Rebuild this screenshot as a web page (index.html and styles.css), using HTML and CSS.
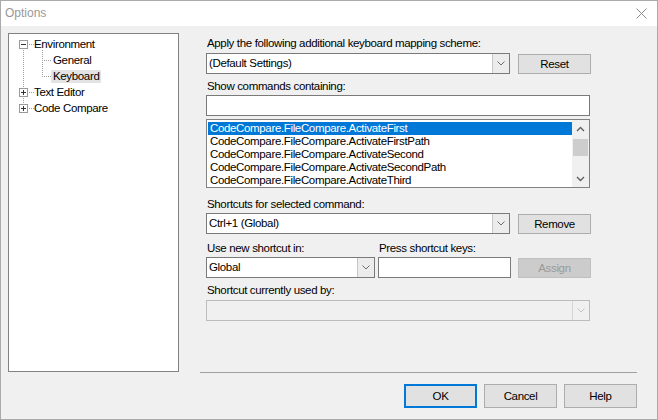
FILE: index.html
```html
<!DOCTYPE html>
<html>
<head>
<meta charset="utf-8">
<title>Options</title>
<link rel="stylesheet" href="styles.css">
</head>
<body>
<div class="window">
  <div class="titlebar">
    <span class="title">Options</span>
    <svg class="close" width="11" height="11" viewBox="0 0 11 11"><path d="M0.5 0.5 L10.5 10.5 M10.5 0.5 L0.5 10.5" stroke="#8c8c8c" stroke-width="1" fill="none"/></svg>
  </div>
  <div class="client">
    <div class="main">
      <div class="tree">
        <svg class="tree-lines" width="60" height="90" viewBox="0 0 60 90">
          <g stroke="#a0a0a0" stroke-width="1" stroke-dasharray="1 1" fill="none">
            <path d="M20 10.5 H26"/>
            <path d="M14.5 16 V54"/>
            <path d="M14.5 64 V70"/>
            <path d="M20 58.5 H26"/>
            <path d="M20 74.5 H26"/>
            <path d="M33.5 16 V43"/>
            <path d="M35 26.5 H43"/>
            <path d="M35 42.5 H43"/>
          </g>
          <g stroke="#9a9a9a" fill="#fff">
            <rect x="10.5" y="6.5" width="8" height="8"/>
            <rect x="10.5" y="54.5" width="8" height="8"/>
            <rect x="10.5" y="70.5" width="8" height="8"/>
          </g>
          <g stroke="#333" stroke-width="1" fill="none">
            <path d="M12 10.5 H17"/>
            <path d="M12 58.5 H17 M14.5 56 V61"/>
            <path d="M12 74.5 H17 M14.5 72 V77"/>
          </g>
        </svg>
        <div class="node l0">Environment</div>
        <div class="node l1"><span class="nt">General</span></div>
        <div class="node l1"><span class="nt sel">Keyboard</span></div>
        <div class="node l0">Text Editor</div>
        <div class="node l0">Code Compare</div>
      </div>
      <div class="side">
        <div class="form">
          <div class="lbl">Apply the following additional keyboard mapping scheme:</div>
          <div class="row r1">
            <div class="combo w304">
              <div class="val">(Default Settings)</div>
              <div class="dd"><svg width="8" height="5" viewBox="0 0 8 5"><path d="M0.5 0.5 L4 4 L7.5 0.5" stroke="#6d6d6d" fill="none"/></svg></div>
            </div>
            <div class="btn">Reset</div>
          </div>
          <div class="lbl m5">Show commands containing:</div>
          <div class="input full"></div>
          <div class="list">
            <div class="items">
              <div class="item selected">CodeCompare.FileCompare.ActivateFirst</div>
              <div class="item">CodeCompare.FileCompare.ActivateFirstPath</div>
              <div class="item">CodeCompare.FileCompare.ActivateSecond</div>
              <div class="item">CodeCompare.FileCompare.ActivateSecondPath</div>
              <div class="item">CodeCompare.FileCompare.ActivateThird</div>
            </div>
            <div class="vscroll">
              <div class="arrow"><svg width="9" height="6" viewBox="0 0 9 6"><path d="M1 5 L4.5 1.5 L8 5" stroke="#606060" stroke-width="1.4" fill="none"/></svg></div>
              <div class="track"><div class="thumb"></div></div>
              <div class="arrow"><svg width="9" height="6" viewBox="0 0 9 6"><path d="M1 1 L4.5 4.5 L8 1" stroke="#606060" stroke-width="1.4" fill="none"/></svg></div>
            </div>
          </div>
          <div class="lbl m9">Shortcuts for selected command:</div>
          <div class="row r2">
            <div class="combo w304">
              <div class="val">Ctrl+1 (Global)</div>
              <div class="dd"><svg width="8" height="5" viewBox="0 0 8 5"><path d="M0.5 0.5 L4 4 L7.5 0.5" stroke="#6d6d6d" fill="none"/></svg></div>
            </div>
            <div class="btn">Remove</div>
          </div>
          <div class="lblrow m7">
            <div class="lbl c1">Use new shortcut in:</div>
            <div class="lbl">Press shortcut keys:</div>
          </div>
          <div class="row r3">
            <div class="combo w169">
              <div class="val">Global</div>
              <div class="dd"><svg width="8" height="5" viewBox="0 0 8 5"><path d="M0.5 0.5 L4 4 L7.5 0.5" stroke="#6d6d6d" fill="none"/></svg></div>
            </div>
            <div class="input w133"></div>
            <div class="btn disabled">Assign</div>
          </div>
          <div class="lbl m5">Shortcut currently used by:</div>
          <div class="combo full disabled">
            <div class="val"></div>
            <div class="dd"><svg width="8" height="5" viewBox="0 0 8 5"><path d="M0.5 0.5 L4 4 L7.5 0.5" stroke="#c4c4c4" fill="none"/></svg></div>
          </div>
        </div>
        <div class="sep"></div>
      </div>
    </div>
    <div class="footer">
      <div class="btn big default">OK</div>
      <div class="btn big">Cancel</div>
      <div class="btn big">Help</div>
    </div>
  </div>
</div>
</body>
</html>
```

FILE: styles.css
```css
* { box-sizing: border-box; }

html, body {
  margin: 0;
  padding: 0;
  background: #f0f0f0;
}

body {
  font-family: "Liberation Sans", Arial, sans-serif;
  font-size: 11.5px;
  letter-spacing: -0.35px;
  color: #000;
}

.window {
  width: 658px;
  height: 420px;
  border: 1px solid #aaaaaa;
  display: flex;
  flex-direction: column;
  background: #f0f0f0;
}

.titlebar {
  height: 25px;
  background: #fff;
  display: flex;
  justify-content: space-between;
  align-items: flex-start;
}

.title {
  padding-left: 4px;
  line-height: 24px;
  font-size: 12px;
  letter-spacing: 0;
  color: #999;
}

.close {
  margin-top: 7px;
  margin-right: 10px;
  display: block;
}

.client {
  flex: 1;
  display: flex;
  flex-direction: column;
}

.main {
  display: flex;
  padding: 7px 0 0 7px;
}

.tree {
  position: relative;
  width: 171px;
  height: 339px;
  border: 1px solid #828282;
  background: #fff;
  padding-top: 2px;
}

.tree-lines {
  position: absolute;
  left: 0;
  top: 0;
}

.node {
  height: 16px;
  line-height: 16px;
  white-space: nowrap;
}

.node.l0 { padding-left: 25px; }
.node.l1 { padding-left: 42px; }

.nt {
  display: inline-block;
  line-height: 13px;
  padding: 0 2px 0 2px;
}

.nt.sel { background: #e3e3e3; }

.side {
  margin-left: 21px;
  width: 437px;
  height: 340px;
  display: flex;
  flex-direction: column;
}

.form {
  flex: 1;
  padding: 3px 0 0 6px;
  width: 391px;
}

.sep {
  height: 1px;
  background: #a0a0a0;
}

.lbl {
  height: 15px;
  line-height: 15px;
  white-space: nowrap;
  padding-left: 1px;
}

.m5 { margin-top: 5px; }
.m7 { margin-top: 7px; }
.m9 { margin-top: 9px; }

.lblrow { display: flex; }
.lbl.c1 { width: 172px; }

.row {
  display: flex;
  align-items: center;
  margin-top: 2px;
}

.r1 { margin-top: 2px; }
.r2 { margin-top: 1px; }
.r3 { margin-top: 1px; }

.r1 .btn, .r2 .btn { margin-left: 8px; }
.r3 .input { margin-left: 3px; }
.r3 .btn { margin-left: 7px; }

.combo {
  height: 21px;
  border: 1px solid #7a7a7a;
  background: #fff;
  display: flex;
}

.combo .val {
  flex: 1;
  line-height: 19px;
  padding-left: 2px;
  white-space: nowrap;
}

.combo .dd {
  width: 17px;
  border-left: 1px solid #c6c6c6;
  background: #ececec;
  display: flex;
  align-items: center;
  justify-content: center;
}

.combo.disabled {
  margin-top: 2px;
  border-color: #bcbcbc;
  background: #f0f0f0;
}

.combo.disabled .dd {
  border-left-color: #d6d6d6;
  background: #f0f0f0;
}

.w304 { width: 304px; }
.w169 { width: 169px; }
.w133 { width: 133px; }
.full { width: 384px; }

.input {
  height: 21px;
  border: 1px solid #7a7a7a;
  background: #fff;
}

.input.full { margin-top: 1px; }

.btn {
  width: 73px;
  height: 20px;
  border: 1px solid #adadad;
  background: #e1e1e1;
  text-align: center;
  line-height: 18px;
  white-space: nowrap;
}

.btn.disabled {
  background: #cccccc;
  border-color: #bfbfbf;
  color: #9a9a9a;
}

.list {
  margin-top: 3px;
  width: 384px;
  height: 69px;
  border: 1px solid #828282;
  background: #fff;
  display: flex;
}

.items {
  flex: 1;
  padding: 2px 0 0 1px;
}

.item {
  height: 13px;
  line-height: 13px;
  padding-left: 2px;
  white-space: nowrap;
  overflow: hidden;
}

.item.selected {
  background: #0078d7;
  color: #fff;
}

.vscroll {
  width: 17px;
  background: #f0f0f0;
  display: flex;
  flex-direction: column;
}

.arrow {
  height: 17px;
  display: flex;
  align-items: center;
  justify-content: center;
}

.track {
  flex: 1;
  padding: 2px 1px 0 1px;
}

.thumb {
  height: 17px;
  background: #cdcdcd;
}

.footer {
  display: flex;
  justify-content: flex-end;
  gap: 7px;
  padding: 11px 20px 0 0;
}

.btn.big {
  height: 24px;
  line-height: 22px;
}

.btn.default {
  border: 2px solid #0078d7;
  line-height: 20px;
}
```
